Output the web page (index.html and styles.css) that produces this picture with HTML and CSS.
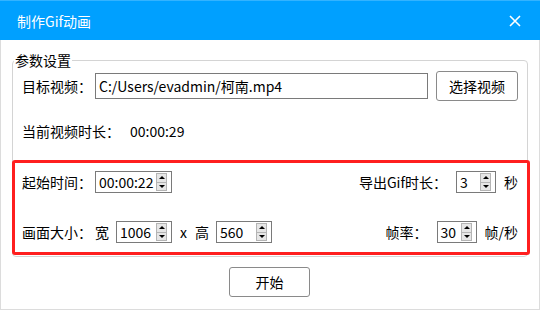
FILE: index.html
```html
<!DOCTYPE html>
<html>
<head>
<meta charset="utf-8">
<title>制作Gif动画</title>
<link rel="stylesheet" href="styles.css">
</head>
<body>

<div class="dialog">
  <div class="titlebar">
    <span class="title">制作Gif动画</span>
    <svg class="close" width="12" height="12" viewBox="0 0 12 12">
      <path d="M1 1 L11 11 M11 1 L1 11" stroke="#fff" stroke-width="1.6" fill="none"/>
    </svg>
  </div>

  <fieldset class="group">
    <legend>参数设置</legend>

    <div class="row row-file">
      <span class="label">目标视频：</span>
      <input class="path" type="text" value="C:/Users/evadmin/柯南.mp4">
      <button class="btn btn-pick">选择视频</button>
    </div>

    <div class="row row-duration">
      <span class="label label-wide">当前视频时长：</span>
      <span>00:00:29</span>
    </div>

    <div class="params">
      <div class="row prow">
        <span class="label">起始时间：</span>
        <div class="spin spin-time">
          <span class="spin-value">00:00:22</span>
          <div class="spin-btns"><span class="up"></span><span class="down"></span></div>
        </div>
        <div class="right">
          <span>导出Gif时长：</span>
          <div class="spin spin-small">
            <span class="spin-value">3</span>
            <div class="spin-btns"><span class="up"></span><span class="down"></span></div>
          </div>
          <span class="unit">秒</span>
        </div>
      </div>

      <div class="row prow">
        <span class="label">画面大小：</span>
        <span>宽</span>
        <div class="spin spin-size">
          <span class="spin-value">1006</span>
          <div class="spin-btns"><span class="up"></span><span class="down"></span></div>
        </div>
        <span class="times">x</span>
        <span>高</span>
        <div class="spin spin-size">
          <span class="spin-value">560</span>
          <div class="spin-btns"><span class="up"></span><span class="down"></span></div>
        </div>
        <div class="right">
          <span>帧率：</span>
          <div class="spin spin-small">
            <span class="spin-value">30</span>
            <div class="spin-btns"><span class="up"></span><span class="down"></span></div>
          </div>
          <span class="unit">帧/秒</span>
        </div>
      </div>
    </div>
  </fieldset>

  <div class="footer">
    <button class="btn btn-start">开始</button>
  </div>
</div>

</body>
</html>
```

FILE: styles.css
```css
* {box-sizing: border-box;}

body {
  margin: 0;
  font-family: "Noto Sans CJK SC", "Liberation Sans", sans-serif;
  font-size: 14px;
  color: #000;
  background: #fff;
}

.dialog {
  width: 540px;
  height: 310px;
  border: 1px solid #dcdcdc;
  border-top: none;
}

.titlebar {
  height: 40px;
  margin: 0 -1px;
  background-color: #00a0ff;
  border-top: 1px solid #33b3ff;
  display: flex;
  align-items: center;
  justify-content: space-between;
  padding: 0 19px 0 17px;
  color: #fff;
}

.title {
  line-height: 20px;
}

/* group box */
.group {
  margin: 10px 11px 0 11px;
  padding: 0 0 1px 0;
  border: 1px solid #d4d4d4;
  border-radius: 4px;
  min-width: 0;
}

.group legend {
  margin-left: 1px;
  padding: 0 1px;
  line-height: 20px;
}

.row {
  display: flex;
  align-items: center;
}

.row-file {
  height: 30px;
  margin-top: 1px;
  padding: 0 9px;
}

.label {
  width: 73px;
  flex-shrink: 0;
}

.label-wide {
  width: 108px;
}

.path {
  width: 333px;
  height: 26px;
  border: 1px solid #7a7a7a;
  font: inherit;
  padding: 0 3px;
  outline: none;
}

.btn {
  font: inherit;
  color: #000;
  background: #fff;
  border: 1px solid #8a8a8a;
  border-radius: 3px;
  height: 30px;
  padding: 0;
}

.btn-pick {
  width: 82px;
  margin-left: 8px;
}

.row-duration {
  height: 20px;
  margin-top: 20px;
  padding-left: 9px;
}

/* the red highlight */
.params {
  margin: 19px -3px 0 -1px;
  border: 3px solid #ff1f1f;
  border-radius: 3px;
  padding: 8px 9px 9px 7px;
  display: flex;
  flex-direction: column;
  gap: 28px;
}

.prow {
  height: 22px;
}

.right {
  margin-left: auto;
  display: flex;
  align-items: center;
}

.right .spin {
  margin-left: 9px;
}

.unit {
  margin-left: 8px;
}

.times {
  margin: 0 8px 0 8px;
}

/* spin boxes */
.spin {
  height: 22px;
  border: 1px solid #7a7a7a;
  display: flex;
  align-items: center;
  padding: 0 4px 0 3px;
  background: #fff;
}

.spin-value {
  flex: 1;
  line-height: 20px;
}

.spin-time {width: 77px;}
.spin-size {width: 56px; margin-left: 7px;}
.spin-small {width: 40px;}

.spin-btns {
  width: 11px;
  height: 18px;
  display: flex;
  flex-direction: column;
}

.spin-btns span {
  flex: 1;
  background: #e6e6e6;
  border: 1px solid #b4b4b4;
  position: relative;
}

.spin-btns .down {
  border-top: none;
}

.spin-btns span::after {
  content: "";
  position: absolute;
  left: 2px;
  top: 2px;
  border-left: 3px solid transparent;
  border-right: 3px solid transparent;
}

.spin-btns .up::after {
  border-bottom: 3px solid #000;
}

.spin-btns .down::after {
  top: 2px;
  border-top: 3px solid #000;
}

.footer {
  display: flex;
  justify-content: center;
  padding-top: 10px;
}

.btn-start {
  width: 81px;
  margin-left: -1px;
}
```
